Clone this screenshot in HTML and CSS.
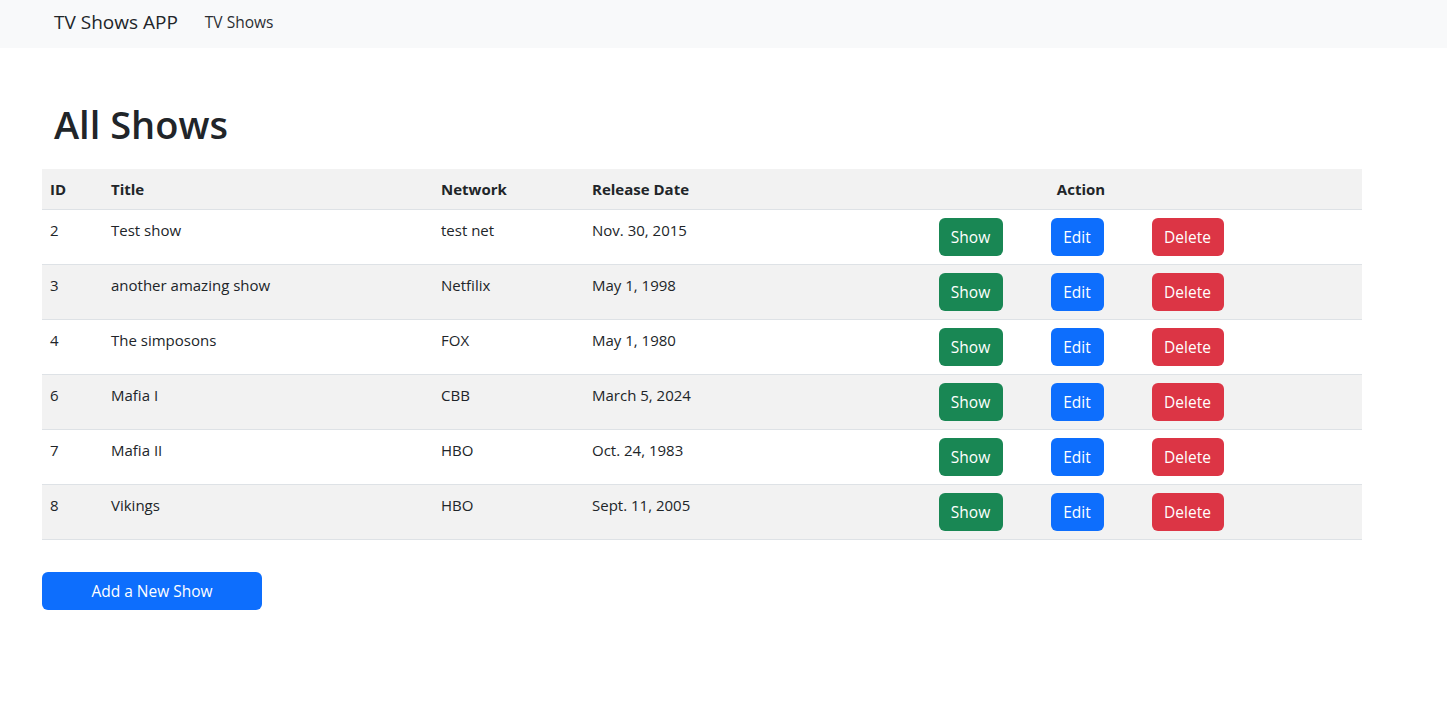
FILE: index.html
```html
<!DOCTYPE html>
<html lang="en">
<head>
<meta charset="utf-8">
<title>TV Shows APP</title>
<link rel="stylesheet" href="styles.css">
</head>
<body>
<nav class="navbar">
  <a class="brand" href="#">TV Shows APP</a>
  <a class="nav-link" href="#">TV Shows</a>
</nav>
<main class="content">
  <h1 class="title">All Shows</h1>
  <table class="shows">
    <colgroup>
      <col class="c-id"><col class="c-title"><col class="c-net"><col class="c-date"><col class="c-act">
    </colgroup>
    <thead>
      <tr><th>ID</th><th>Title</th><th>Network</th><th>Release Date</th><th class="center">Action</th></tr>
    </thead>
    <tbody>
      <tr><td>2</td><td>Test show</td><td>test net</td><td>Nov. 30, 2015</td><td class="actions"><a class="btn btn-show">Show</a><a class="btn btn-edit">Edit</a><a class="btn btn-delete">Delete</a></td></tr>
      <tr class="odd"><td>3</td><td>another amazing show</td><td>Netfilix</td><td>May 1, 1998</td><td class="actions"><a class="btn btn-show">Show</a><a class="btn btn-edit">Edit</a><a class="btn btn-delete">Delete</a></td></tr>
      <tr><td>4</td><td>The simposons</td><td>FOX</td><td>May 1, 1980</td><td class="actions"><a class="btn btn-show">Show</a><a class="btn btn-edit">Edit</a><a class="btn btn-delete">Delete</a></td></tr>
      <tr class="odd"><td>6</td><td>Mafia I</td><td>CBB</td><td>March 5, 2024</td><td class="actions"><a class="btn btn-show">Show</a><a class="btn btn-edit">Edit</a><a class="btn btn-delete">Delete</a></td></tr>
      <tr><td>7</td><td>Mafia II</td><td>HBO</td><td>Oct. 24, 1983</td><td class="actions"><a class="btn btn-show">Show</a><a class="btn btn-edit">Edit</a><a class="btn btn-delete">Delete</a></td></tr>
      <tr class="odd"><td>8</td><td>Vikings</td><td>HBO</td><td>Sept. 11, 2005</td><td class="actions"><a class="btn btn-show">Show</a><a class="btn btn-edit">Edit</a><a class="btn btn-delete">Delete</a></td></tr>
    </tbody>
  </table>
  <a class="btn btn-add" href="#">Add a New Show</a>
</main>
</body>
</html>
```

FILE: styles.css
```css
* { box-sizing: border-box; }
html, body { margin: 0; padding: 0; }
body {
  font-family: "Open Sans", "Noto Sans", "Liberation Sans", sans-serif;
  font-size: 15px;
  line-height: 24px;
  color: #212529;
  background: #fff;
}
a { text-decoration: none; }

.navbar {
  height: 48px;
  background: #f8f9fa;
  display: flex;
  align-items: center;
  padding: 0 0 5px 54px;
}
.brand {
  font-size: 19px;
  color: #212529;
  margin-right: 27px;
  line-height: 30px;
}
.nav-link {
  font-size: 15.5px;
  color: #2b2e33;
}

.content {
  padding: 52px 0 0 42px;
  width: 1362px;
}
.title {
  margin: 0 0 21px 12px;
  font-size: 38px;
  font-weight: 600;
  line-height: 48px;
}

.shows {
  width: 1320px;
  border-collapse: collapse;
  margin-bottom: 32px;
}
.c-id { width: 61px; }
.c-title { width: 330px; }
.c-net { width: 151px; }
.c-date { width: 216px; }
.c-act { width: 562px; }

.shows th, .shows td {
  padding: 8px;
  text-align: left;
  vertical-align: top;
  border-bottom: 1px solid #dee2e6;
}
.shows th {
  font-weight: 700;
  background: #f2f2f2;
  height: 40px;
  font-size: 15px;
}
.shows td { height: 55px; }
.shows .center { text-align: center; }
.shows tr.odd td { background: #f2f2f2; }
.shows td.actions {
  text-align: center;
  font-size: 0;
}

.btn {
  display: inline-block;
  height: 38px;
  line-height: 38px;
  border-radius: 6px;
  color: #fff;
  font-size: 15.5px;
  text-align: center;
  vertical-align: top;
}
.btn-show { background: #198754; width: 64px; }
.btn-edit { background: #0d6efd; width: 53px; margin: 0 48px; }
.btn-delete { background: #dc3545; width: 72px; }
.btn-add {
  background: #0d6efd;
  width: 220px;
  display: block;
}
```
